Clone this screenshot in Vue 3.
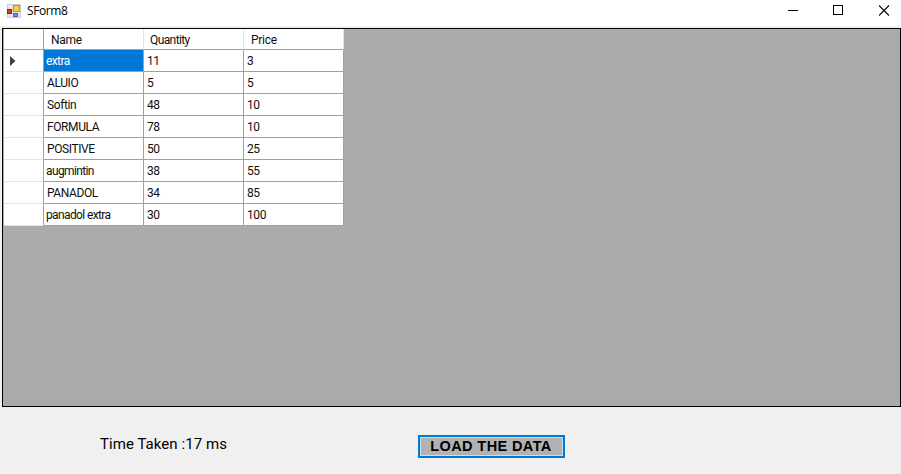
<script setup>
const columns = ['Name', 'Quantity', 'Price']
const rows = [
  ['extra', 11, 3],
  ['ALUIO', 5, 5],
  ['Softin', 48, 10],
  ['FORMULA', 78, 10],
  ['POSITIVE', 50, 25],
  ['augmintin', 38, 55],
  ['PANADOL', 34, 85],
  ['panadol extra', 30, 100],
]
const isLower = (v) => typeof v === 'string' && v === v.toLowerCase()
</script>

<template>
  <div class="window">
    <header class="titlebar">
      <svg class="app-icon" width="14" height="14" viewBox="0 0 14 14">
        <rect x="0.5" y="0.5" width="13" height="13" fill="#e8e8e8" stroke="#cfcfcf" />
        <rect x="0.5" y="5.5" width="4" height="4" fill="#d23a28" stroke="#981f17" />
        <rect x="6.5" y="1.5" width="6" height="6" fill="#fbcb45" stroke="#c98d18" />
        <rect x="6.5" y="9.5" width="4" height="3" fill="#5a9bf5" stroke="#3268cf" />
      </svg>
      <span class="title">SForm8</span>
      <div class="controls">
        <svg width="11" height="11" viewBox="0 0 11 11"><path d="M1 5.5H11" stroke="#000" /></svg>
        <svg width="11" height="11" viewBox="0 0 11 11"><rect x="0.5" y="0.5" width="9" height="9" fill="none" stroke="#000" /></svg>
        <svg width="11" height="11" viewBox="0 0 11 11"><path d="M0 0.5L10 10.5M10 0.5L0 10.5" stroke="#000" stroke-width="1.1" /></svg>
      </div>
    </header>
    <main class="grid-view">
      <div class="table">
        <div class="row head">
          <div class="selector"></div>
          <div v-for="c in columns" :key="c" class="cell">{{ c }}</div>
        </div>
        <div v-for="(r, i) in rows" :key="i" class="row">
          <div class="selector">
            <svg v-if="i === 0" width="6" height="10" viewBox="0 0 6 10"><path d="M0 0L5.5 5L0 10Z" fill="#404040" /></svg>
          </div>
          <div v-for="(v, j) in r" :key="j" class="cell" :class="{ selected: i === 0 && j === 0, lower: isLower(v) }">{{ v }}</div>
        </div>
      </div>
    </main>
    <footer class="footer">
      <span class="time">Time Taken :17 ms</span>
      <button class="load">LOAD THE DATA</button>
    </footer>
  </div>
</template>

<style>
body { margin: 0; background: #f0f0f0; }
</style>

<style scoped>
.window {
  width: 901px;
  height: 474px;
  overflow: hidden;
  display: flex;
  flex-direction: column;
  background: #f0f0f0;
  color: #000;
  font-family: Roboto, "Liberation Sans", sans-serif;
}
.titlebar {
  height: 26px;
  flex: none;
  box-sizing: border-box;
  padding: 0 11px 5px 7px;
  display: flex;
  align-items: center;
  background: #fff;
}
.title {
  margin-left: 6px;
  font: 12px/16px "Open Sans", sans-serif;
  letter-spacing: -0.4px;
}
.controls { margin-left: auto; display: flex; gap: 35px; }
.controls svg, .app-icon { display: block; }
.grid-view {
  margin: 2px 0 0 2px;
  height: 379px;
  flex: none;
  box-sizing: border-box;
  border: 1px solid #000;
  background: #ababab;
}
.table { width: 341px; padding-left: 1px; }
.row { display: flex; height: 22px; }
.row.head { height: 21px; }
.selector {
  width: 40px;
  box-sizing: border-box;
  flex: none;
  display: flex;
  align-items: center;
  padding-left: 6px;
  background: #fff;
  border-right: 1px solid #a0a0a0;
  border-bottom: 1px solid #e3e3e3;
}
.cell {
  width: 100px;
  box-sizing: border-box;
  flex: none;
  padding-left: 3px;
  background: #fff;
  border-right: 1px solid #a0a0a0;
  border-bottom: 1px solid #a0a0a0;
  color: #101010;
  font-size: 12px;
  line-height: 22px;
  letter-spacing: -0.4px;
  white-space: nowrap;
}
.cell.lower { padding-left: 2px; letter-spacing: -0.62px; }
.head .selector { border-bottom-color: #a0a0a0; }
.head .cell { padding-left: 7px; border-right-color: #e3e3e3; letter-spacing: -0.6px; }
.head .cell:nth-child(2) { letter-spacing: -0.3px; }
.head .cell:nth-child(3) { padding-left: 6px; }
.cell.selected { background: #0078d7; color: #fff; letter-spacing: -0.6px; }
.footer { flex: 1; display: flex; align-items: flex-start; }
.time {
  width: 318px;
  padding: 27px 0 0 100px;
  box-sizing: content-box;
  font-size: 15px;
  line-height: 20px;
  letter-spacing: 0.06px;
  white-space: nowrap;
}
.load {
  width: 147px;
  height: 23px;
  margin: 28px 0 0;
  padding: 0 1px 0 0;
  border: 2px solid #0078d7;
  box-shadow: inset 0 0 0 1px #c8dff0;
  background: #b2b2b2;
  color: #000;
  font: bold 14.5px/17px "Liberation Sans", sans-serif;
  letter-spacing: 0.4px;
  white-space: nowrap;
}
.head .cell:nth-child(4) { letter-spacing: -0.3px; }
</style>
